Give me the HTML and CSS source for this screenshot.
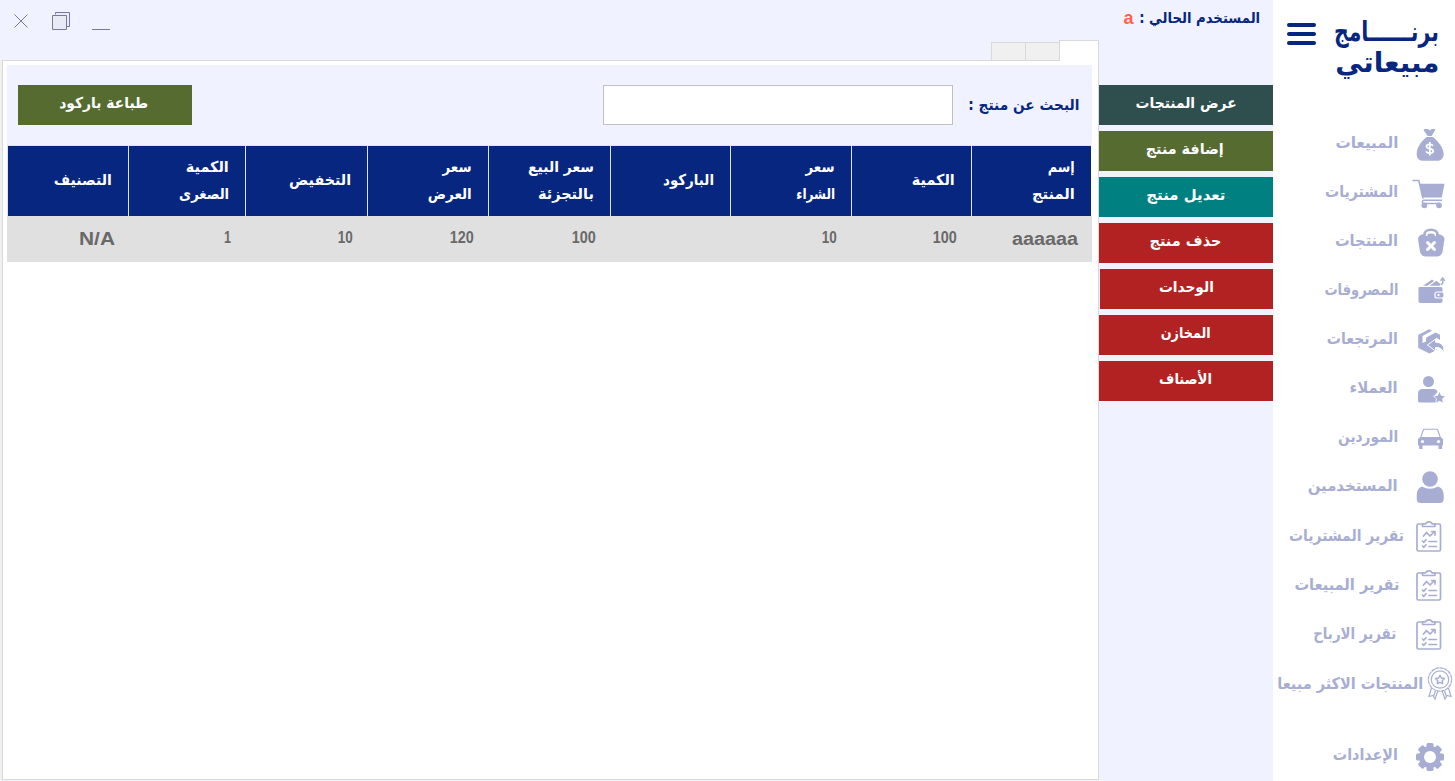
FILE: index.html
```html
<!DOCTYPE html>
<html lang="ar" dir="rtl">
<head>
<meta charset="utf-8">
<title>برنامج مبيعاتي</title>
<link rel="stylesheet" href="styles.css">
</head>
<body>
<svg class="defs" width="0" height="0">
  <symbol id="clipboard" viewBox="0 0 44 36">
    <g fill="none" stroke="currentColor" stroke-width="1.700" stroke-linecap="round" stroke-linejoin="round">
      <path d="M11.500 5H7.500Q6 5 6 6.500v24Q6 32 7.500 32h20.500q1.500 0 1.500-1.500v-24Q29.500 5 28 5h-4"/>
      <path d="M11.500 7V4.800h3Q15.500 2.800 18 2.800T21 4.800h3V7q0 .5-.5.500H12q-.5 0-.5-.5z"/>
      <path d="M12.500 17l3-3.500 3.500 3.500 4.500-4.500M20.500 12.500h3.500V16M11.500 22l1.300 1.300 2.200-2.600M11.500 27l1.300 1.300 2.200-2.600M18 22.500h7.500M18 27.500h7.500"/>
    </g>
  </symbol>
</svg>
<div class="app">
  <aside class="sidebar">
    <header class="brand">
      <div class="logo"><span class="fit" data-w="105">برنــــــامج</span><span class="fit" data-w="104">مبيعاتي</span></div>
      <div class="burger"><i></i><i></i><i></i></div>
    </header>
    <nav class="menu">
      <a class="item"><svg class="icon" viewBox="0 0 44 36"><path d="M12.500 3q0-1 1.500-1h3l2 1.300L21 2h2.500q1.200 0 .7 1l-3.500 6h-4zM15.500 10h6.500c6 5 10.700 11.500 10.700 17 0 5-3.200 6.800-7 6.800h-13c-4 0-7-1.800-7-6.800 0-6 3.800-12 9.800-17z" fill="currentColor"/><path d="M22 18.700c-1-1.700-6.500-2-6.500.7 0 3 6.700 1.500 6.700 4.500 0 3-6 2.700-7.200.4M18.800 15v13.500" fill="none" stroke="#fff" stroke-width="1.700"/></svg><span class="fit" data-w="63">المبيعات</span></a>
      <a class="item"><svg class="icon" viewBox="0 0 44 36"><path d="M8.500 7.800h25L30.800 21.500H11.500z" fill="currentColor"/><path d="M1.500 4.500h6.300L12 22.500M31 24.300H12.500a1.700 1.700 0 0 0 0 3.200H29" fill="none" stroke="currentColor" stroke-width="1.600"/><circle cx="13.300" cy="29.300" r="2.900" fill="currentColor"/><circle cx="28" cy="29.300" r="2.900" fill="currentColor"/></svg><span class="fit" data-w="73">المشتريات</span></a>
      <a class="item"><svg class="icon" viewBox="0 0 44 36"><path d="M10.500 9.500q9.500-2 18.500 0 4 1 4.500 4.500L31.500 27q-1 4-5 4.500H14q-4-.5-5-4.500L7 14q.5-3.500 3.500-4.500z" fill="currentColor"/><path d="M13.200 10c0-7 13.600-7 13.600 0" fill="none" stroke="currentColor" stroke-width="2.500"/><path d="M15.500 11c.5-5 8.500-5 9 0" fill="none" stroke="#fff" stroke-width="1.500"/><path d="M16.500 17.500l7 7m0-7l-7 7" stroke="#fff" stroke-width="3" stroke-linecap="round"/></svg><span class="fit" data-w="63">المنتجات</span></a>
      <a class="item"><svg class="icon" viewBox="0 0 44 36"><path d="M9 13h21q1.500 0 1.500 1.500V27q0 2-2 2h-20q-2 0-2-2V14q0-1 1.500-1zM12 11.800l9-6.300 2 1.500-6.500 4.800zM18.500 11.800l7-5 3.500 3v2z" fill="currentColor"/><path d="M29.500 10.500q2.300 0 2.300-2V5M29.500 6.800L31.800 4l2 2.800" fill="none" stroke="currentColor" stroke-width="1.400"/><rect x="24" y="18" width="9" height="6" rx="2" fill="currentColor" stroke="#fff" stroke-width="1.200"/><circle cx="27.500" cy="21" r="1.200" fill="#fff"/></svg><span class="fit" data-w="74">المصروفات</span></a>
      <a class="item"><svg class="icon" viewBox="0 0 44 36"><path d="M7.200 12L18 6.200l3 1.500L11.500 13v7l3.500-1.500v-3.700L24.500 9.500l4.500 2.300v5.200l-4-2.500v4l-6.500 5 7.500 3.300-7.500 3.700L7.200 25z" fill="currentColor"/><path d="M16.500 22l8-6v3.200c6 0 9.500 4 8 10.500-1.500-4-4-5.500-8-5.200v3.500z" fill="currentColor" stroke="#fff" stroke-width="1"/></svg><span class="fit" data-w="71">المرتجعات</span></a>
      <a class="item"><svg class="icon" viewBox="0 0 44 36"><circle cx="17.500" cy="9.500" r="5.500" fill="currentColor"/><path d="M12 17h10q4 0 4.500 3l-3.500 4 3 3-.7 3.500H9q-2 0-2-2V22q0-5 5-5z" fill="currentColor"/><path d="M28.500 19.500l1.900 3.900 4.100.6-3 3 .8 4.300-3.800-2-3.800 2 .8-4.300-3-3 4.100-.6z" fill="currentColor" stroke="#fff" stroke-width=".8"/></svg><span class="fit" data-w="48">العملاء</span></a>
      <a class="item"><svg class="icon" viewBox="0 0 44 36"><path d="M9.500 17L12.300 9q.3-.8 1.200-.8h12q.9 0 1.200.8l2.800 8" fill="none" stroke="currentColor" stroke-width="1.100"/><path d="M9.500 16h20l2.500 2v6.500h-1V28h-3.500v-3.500h-16V28H8.200v-3.500H7V18z" fill="currentColor"/><circle cx="11.500" cy="20.500" r="1.600" fill="#fff"/><circle cx="27.500" cy="20.500" r="1.600" fill="#fff"/></svg><span class="fit" data-w="60">الموردين</span></a>
      <a class="item"><svg class="icon" viewBox="0 0 44 36"><circle cx="19" cy="9" r="7.800" fill="currentColor"/><path d="M11 16.500q8 4.500 16 0 5.700 1.500 5.700 9V29q0 4-4 4h-19q-4 0-4-4v-3.500q0-7.500 5.300-9z" fill="currentColor"/></svg><span class="fit" data-w="90">المستخدمين</span></a>
      <a class="item near"><svg class="icon"><use href="#clipboard"/></svg><span class="fit" data-w="115">تقرير المشتريات</span></a>
      <a class="item mid"><svg class="icon"><use href="#clipboard"/></svg><span class="fit" data-w="105">تقرير المبيعات</span></a>
      <a class="item far"><svg class="icon"><use href="#clipboard"/></svg><span class="fit" data-w="83">تقرير الارباح</span></a>
      <a class="item tight"><svg class="icon medal" viewBox="0 0 28 36"><g fill="none" stroke="currentColor" stroke-width="1.200"><circle cx="13" cy="13.500" r="11.600" stroke-dasharray="4 .5"/><circle cx="13" cy="13.500" r="8.700"/><path stroke-width="1.500" stroke-linejoin="round" d="M13 9.300l1.400 2.700 3 .5-2.200 2.200.5 3-2.700-1.400-2.700 1.400.5-3-2.200-2.200 3-.5z"/><path d="M4.500 22L2 30.500l4-1 2 3.500 3-8.500M21.500 22l2.500 8.500-4-1-2 3.500-3-8.500M8.500 24.500L7 29.500M17.500 24.500l1.500 5"/></g></svg><span class="fit" data-w="146">المنتجات الاكثر مبيعا</span></a>
      <a class="item settings"><svg class="icon" viewBox="0 0 44 36"><g fill="currentColor" transform="translate(19 18)"><circle r="11"/><g id="teeth"><rect x="-3.500" y="-14" width="7" height="28" rx="1.500"/><rect x="-14" y="-3.500" width="28" height="7" rx="1.500"/></g><use href="#teeth" transform="rotate(45)"/><circle r="6" fill="#fff"/></g></svg><span class="fit" data-w="65">الإعدادات</span></a>
    </nav>
  </aside>

  <section class="actions">
    <p class="user"><span class="fit" data-w="121">المستخدم الحالي :</span><b class="fit" data-w="10">a</b></p>
    <button class="btn slate"><span class="fit" data-w="101">عرض المنتجات</span></button>
    <button class="btn olive"><span class="fit" data-w="78">إضافة منتج</span></button>
    <button class="btn teal"><span class="fit" data-w="79">تعديل منتج</span></button>
    <button class="btn red"><span class="fit" data-w="72">حذف منتج</span></button>
    <button class="btn red narrow"><span class="fit" data-w="55">الوحدات</span></button>
    <button class="btn red"><span class="fit" data-w="50">المخازن</span></button>
    <button class="btn red"><span class="fit" data-w="53">الأصناف</span></button>
  </section>

  <main class="main">
    <div class="window">
      <svg width="112" height="34" viewBox="0 0 112 34" fill="none" stroke="#777a9c"><path d="M14.500 14.500l13 13m0-13l-13 13"/><path fill="#e8ebf6" d="M55.500 14.500v-2h14v14h-3M52.500 15.500h14v14h-14z"/><path d="M92 29.500h18"/></svg>
    </div>
    <div class="tabs"><i class="tab active"></i><i class="tab"></i><i class="tab"></i></div>
    <div class="panel">
      <div class="toolbar">
        <label class="search"><span class="fit" data-w="111">البحث عن منتج :</span><input type="text"></label>
        <button class="btn olive print"><span class="fit" data-w="89">طباعة باركود</span></button>
      </div>
      <div class="grid head">
        <div><span class="fit" data-w="27">إسم</span><span class="fit" data-w="43">المنتج</span></div>
        <div><span class="fit" data-w="43">الكمية</span></div>
        <div><span class="fit" data-w="29">سعر</span><span class="fit" data-w="39">الشراء</span></div>
        <div><span class="fit" data-w="51">الباركود</span></div>
        <div><span class="fit" data-w="66">سعر البيع</span><span class="fit" data-w="56">بالتجزئة</span></div>
        <div><span class="fit" data-w="29">سعر</span><span class="fit" data-w="44">العرض</span></div>
        <div><span class="fit" data-w="62">التخفيض</span></div>
        <div><span class="fit" data-w="43">الكمية</span><span class="fit" data-w="50">الصغرى</span></div>
        <div><span class="fit" data-w="58">التصنيف</span></div>
      </div>
      <div class="grid row">
        <div class="latin"><span class="fit" data-w="66">aaaaaa</span></div>
        <div><span class="fit" data-w="24">100</span></div>
        <div><span class="fit" data-w="15">10</span></div>
        <div></div>
        <div><span class="fit" data-w="24">100</span></div>
        <div><span class="fit" data-w="24">120</span></div>
        <div><span class="fit" data-w="15">10</span></div>
        <div><span class="fit" data-w="7">1</span></div>
        <div class="latin"><span class="fit" data-w="36">N/A</span></div>
      </div>
    </div>
  </main>
</div>
<script src="fit.js"></script>
</body>
</html>
```
FILE: styles.css
```css
* { box-sizing: border-box; }
body { margin: 0; font-family: "DejaVu Sans", sans-serif; font-weight: bold; font-size: 15px; overflow: hidden; }
.defs { position: absolute; }
.app { display: flex; width: 1455px; height: 781px; background: #f0f3ff; }
.fit { display: inline-block; white-space: nowrap; flex: none; }
.fit > span { display: inline-block; transform-origin: 100% 50%; }

.sidebar { width: 182px; background: #fff; color: #a8aed3; flex: none; }
.brand { display: flex; height: 120px; padding: 16px 16px 0 0; color: #06267f; }
.logo { display: flex; flex-direction: column; width: 105px; font-size: 28px; line-height: 31px; }
.burger { display: flex; flex-direction: column; gap: 5px; margin: 7px 18px 0 0; width: 29px; }
.burger i { height: 4px; border-radius: 2px; background: #06267f; }
.menu { display: flex; flex-direction: column; }
.item { display: flex; align-items: center; height: 49px; gap: 13px; font-size: 16px; line-height: 24px; }
.item .icon { width: 44px; height: 36px; flex: none; }
.item .fit { margin-top: -4px; }
.item.near { gap: 7px; }
.item.mid { gap: 12px; }
.item.far { gap: 15px; }
.item.near .fit, .item.mid .fit, .item.far .fit { margin-top: -2px; }
.item.tight { gap: 4px; }
.item.tight .fit { margin-top: 1px; }
.item .medal { width: 28px; }
.item.settings { margin-top: 24px; }

.actions { display: flex; flex-direction: column; gap: 6px; width: 174px; flex: none; }
.user { display: flex; gap: 5px; align-items: center; height: 79px; margin: 0; padding: 0 13px 43px 0; color: #06267f; }
.user b { color: #ff6347; font: bold 19px "Liberation Sans", sans-serif; }
.btn { display: flex; justify-content: center; align-items: center; width: 174px; height: 40px; padding: 0 0 4px 2px; border: 0; color: #fff; font: inherit; flex: none; }
.slate { background: #2f4f4f; padding-left: 0; }
.olive { background: #556b2f; padding-left: 0; padding-right: 3px; }
.teal { background: #008080; padding-right: 3px; }
.red { background: #b22222; padding-right: 3px; }
.print { padding-right: 2px; }
.narrow { width: 173px; }

.main { display: flex; flex-direction: column; width: 1099px; flex: none; }
.window { height: 40px; display: flex; justify-content: flex-end; }
.tabs { display: flex; align-items: flex-end; height: 20px; }
.tab { width: 34px; height: 18px; background: #f0f0f0; border: 1px solid #d9d9d9; border-width: 1px 0 0 1px; }
.tab.active { width: 40px; height: 21px; margin-bottom: -1px; background: #fff; border-width: 1px 1px 0; z-index: 1; }
.panel { height: 720px; margin-left: 2px; padding: 4px 6px 0 4px; background: #fff; border: 1px solid #d9d9d9; box-shadow: -2px 0 #f0f0f0; }
.toolbar { display: flex; justify-content: space-between; height: 80px; padding: 20px 13px 0 11px; background: #f0f3ff; color: #06267f; }
.search { display: flex; height: 40px; gap: 15px; align-items: center; }
.search input { width: 350px; height: 40px; border: 1px solid #c0c0c0; background: #fff; }
.grid { display: grid; grid-template-columns: 120px 120px 121px 120px 122px 121px 122px 117px 121px; }
.head { height: 71px; margin-right: 1px; border-top: 1px solid #dfe2ef; color: #fff; }
.head div { display: flex; flex-direction: column; justify-content: center; background: #06267f; border-left: 1px solid #dfe2ef; padding: 0 16px 1px 0; line-height: 27px; }
.row { height: 46px; padding-right: 1px; background: #e0e0e0; color: #696969; font: bold 16px "Liberation Sans", sans-serif; }
.row div { display: flex; align-items: center; padding: 0 14px 2px 0; }
.row .latin { font-size: 18px; padding: 0 13px 0 0; }
```
FILE: fit.js
```js
document.querySelectorAll('.fit').forEach(function (el) {
  var inner = document.createElement('span');
  inner.textContent = el.textContent;
  el.textContent = '';
  el.appendChild(inner);
  var target = Number(el.dataset.w);
  var natural = inner.getBoundingClientRect().width;
  el.style.width = target + 'px';
  inner.style.transform = 'scaleX(' + target / natural + ')';
});
```
